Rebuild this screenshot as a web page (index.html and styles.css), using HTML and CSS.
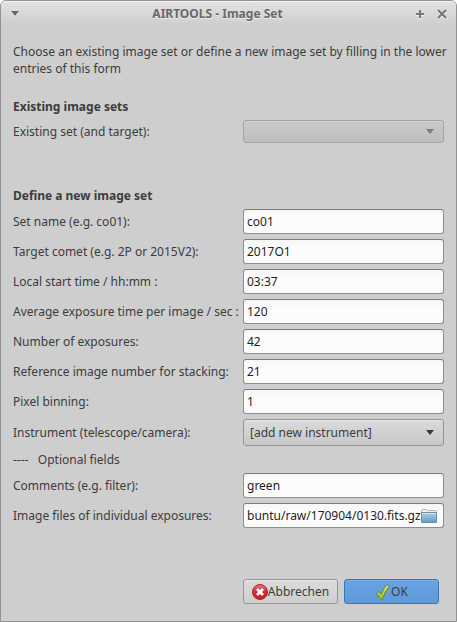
FILE: index.html
```html
<!DOCTYPE html>
<html lang="en">
<head>
<meta charset="utf-8">
<title>AIRTOOLS - Image Set</title>
<link rel="stylesheet" href="styles.css">
</head>
<body>
<div class="window">
  <header class="titlebar">
    <button class="title-button" type="button" aria-label="Window menu">
      <svg width="10" height="10" viewBox="0 0 10 10"><path d="M1 3h8L5 8z" fill="#fff" opacity=".7"/><path d="M1 2h8L5 7z" fill="#686868"/></svg>
    </button>
    <h1 class="title">AIRTOOLS - Image Set</h1>
    <button class="title-button" type="button" aria-label="Maximize">
      <svg width="10" height="10" viewBox="0 0 10 10"><path d="M5 2v8M1 6h8" stroke="#f4f4f4" stroke-width="2"/><path d="M5 1v8M1 5h8" stroke="#757575" stroke-width="2"/></svg>
    </button>
    <button class="title-button" type="button" aria-label="Close">
      <svg width="10" height="10" viewBox="0 0 10 10"><path d="M1 2l8 8M9 2l-8 8" stroke="#f4f4f4" stroke-width="2"/><path d="M1 1l8 8M9 1l-8 8" stroke="#757575" stroke-width="2"/></svg>
    </button>
  </header>
  <form class="form">
    <p class="intro">Choose an existing image set or define a new image set by filling in the lower entries of this form</p>

    <h2 class="heading">Existing image sets</h2>
    <div class="row">
      <label for="existing">Existing set (and target):</label>
      <div class="combo combo-disabled">
        <select id="existing" disabled><option></option></select>
        <svg class="arrow" width="8" height="5" viewBox="0 0 8 5"><path d="M0 0h8L4 5z"/></svg>
      </div>
    </div>

    <h2 class="heading heading-new">Define a new image set</h2>
    <div class="row"><label for="name">Set name (e.g. co01):</label><input class="entry" id="name" value="co01"></div>
    <div class="row"><label for="comet">Target comet (e.g. 2P or 2015V2):</label><input class="entry" id="comet" value="2017O1"></div>
    <div class="row"><label for="start">Local start time / hh:mm :</label><input class="entry" id="start" value="03:37"></div>
    <div class="row"><label for="exposure">Average exposure time per image / sec :</label><input class="entry" id="exposure" value="120"></div>
    <div class="row"><label for="count">Number of exposures:</label><input class="entry" id="count" value="42"></div>
    <div class="row"><label for="reference">Reference image number for stacking:</label><input class="entry" id="reference" value="21"></div>
    <div class="row"><label for="binning">Pixel binning:</label><input class="entry" id="binning" value="1"></div>
    <div class="row">
      <label for="instrument">Instrument (telescope/camera):</label>
      <div class="combo">
        <select id="instrument"><option>[add new instrument]</option></select>
        <svg class="arrow" width="8" height="5" viewBox="0 0 8 5"><path d="M0 0h8L4 5z"/></svg>
      </div>
    </div>
    <p class="note">----&nbsp;&nbsp; Optional fields</p>
    <div class="row"><label for="comments">Comments (e.g. filter):</label><input class="entry" id="comments" value="green"></div>
    <div class="row">
      <label for="files">Image files of individual exposures:</label>
      <div class="entry file">
        <input id="files" value="buntu/raw/170904/0130.fits.gz">
        <button class="browse" type="button" aria-label="Browse">
          <svg width="16" height="14" viewBox="0 0 16 14">
            <defs><linearGradient id="folder" x1="0" y1="0" x2="0" y2="1"><stop offset="0" stop-color="#b5cfe2"/><stop offset="1" stop-color="#5f9dcb"/></linearGradient></defs>
            <path d="M.5 4V1.500q0-1 1-1h4l1 1h8q1 0 1 1V4" fill="#f2f2f2" stroke="#b2b2b0"/>
            <path d="M.5 3.500h15v10H.5z" fill="url(#folder)" stroke="#6f8fa8"/>
            <path d="M1 4.500h14" stroke="#d3e3ef"/>
          </svg>
        </button>
      </div>
    </div>

    <div class="actions">
      <button class="action" type="button">
        <svg width="16" height="16" viewBox="0 0 16 16">
          <defs><linearGradient id="red" x1="0" y1="0" x2="0" y2="1"><stop offset="0" stop-color="#ef7474"/><stop offset=".5" stop-color="#d62c34"/><stop offset="1" stop-color="#c41d2b"/></linearGradient></defs>
          <circle cx="8" cy="8" r="7.500" fill="url(#red)" stroke="#a82430"/>
          <path d="M5 5l6 6M11 5l-6 6" stroke="#fff" stroke-width="2.600"/>
        </svg>Abbrechen</button>
      <button class="action action-default" type="submit">
        <svg width="16" height="16" viewBox="0 0 16 16">
          <defs><linearGradient id="green" x1="0" y1="0" x2="0" y2="1"><stop offset="0" stop-color="#dcea6a"/><stop offset="1" stop-color="#9cc32c"/></linearGradient></defs>
          <path d="M1.500 9.500L4 7.500l2.200 2.700Q8.500 4 12 .8l2.500 1.200Q10 7 7.500 15H5.500Q4 12 1.500 9.500z" fill="url(#green)" stroke="#66882a" stroke-linejoin="round"/>
        </svg>OK</button>
    </div>
  </form>
</div>
</body>
</html>
```
FILE: styles.css
```css
* {
  box-sizing: border-box;
}

body {
  margin: 0;
  background: #fff;
  color: #3c3c3c;
  font: 12px/17px "Noto Sans", sans-serif;
}

.window {
  min-height: 100vh;
  border: 1px solid #929292;
  border-radius: 6px 6px 0 0;
  background: #cecece;
}

.titlebar {
  display: flex;
  align-items: center;
  gap: 12px;
  height: 24px;
  padding: 0 9px;
  border-top: 1px solid #f4f4f4;
  border-radius: 5px 5px 0 0;
  background: linear-gradient(#e2e2e2, #cecece);
}

.title {
  flex: 1;
  margin: 0;
  font-size: 12px;
  text-align: center;
  color: #686868;
  text-shadow: 0 1px #eee;
}

.title-button,
.browse {
  display: flex;
  padding: 0;
  border: 0;
  background: none;
}

.form {
  display: flex;
  flex-direction: column;
  gap: 5px;
  padding: 18px 12px 17px;
}

.intro,
.heading,
.note {
  margin: 0;
}

.intro {
  margin-right: -10px;
  margin-bottom: 16px;
}

.heading {
  font-size: 12px;
}

.heading-new {
  margin-top: 39px;
}

.row {
  display: grid;
  grid-template-columns: 225px minmax(0, 1fr);
  column-gap: 5px;
  align-items: center;
}

.row label {
  white-space: nowrap;
}

input,
select,
button {
  min-width: 0;
  font: inherit;
  color: inherit;
}

.entry {
  width: 100%;
  height: 25px;
  padding: 0 3px;
  border: 1px solid #8e8e8e;
  border-top-color: #7c7c7c;
  border-radius: 3px;
  background: linear-gradient(#f6f6f6, #fcfcfc 8px);
  color: #1e1e1e;
}

.file {
  display: flex;
  align-items: center;
  padding-right: 6px;
}

.file input {
  flex: 1;
  padding: 0;
  border: 0;
  background: none;
}

.combo {
  display: grid;
  align-items: center;
}

.combo select,
.arrow {
  grid-area: 1 / 1;
}

.combo select {
  width: 100%;
  height: 27px;
  padding: 0 24px 0 6px;
  border: 1px solid #969696;
  border-radius: 3px;
  appearance: none;
  background: linear-gradient(#dadada, #c8c8c8);
  box-shadow: inset 0 1px #e2e2e2;
}

.combo-disabled select {
  height: 23px;
  border-color: #a4a4a4;
  background: linear-gradient(#cacaca, #bebebe);
  box-shadow: inset 0 1px #d2d2d2;
  opacity: 1;
}

.arrow {
  justify-self: end;
  margin-right: 10px;
  fill: #3c3c3c;
  pointer-events: none;
}

.combo-disabled .arrow {
  fill: #7c7c7c;
}

.actions {
  display: flex;
  justify-content: flex-end;
  gap: 6px;
  margin-top: 46px;
  padding-right: 5px;
}

.action {
  display: flex;
  align-items: center;
  justify-content: center;
  width: 95px;
  height: 25px;
  padding: 0;
  border: 1px solid #969696;
  border-radius: 3px;
  background: linear-gradient(#dcdcdc, #cecece);
  box-shadow: inset 0 1px #e6e6e6;
}

.action-default {
  border-color: #3874bc;
  background: linear-gradient(#68a4e4, #5e9ad8);
  box-shadow: inset 0 1px #78b0ea;
}
```
